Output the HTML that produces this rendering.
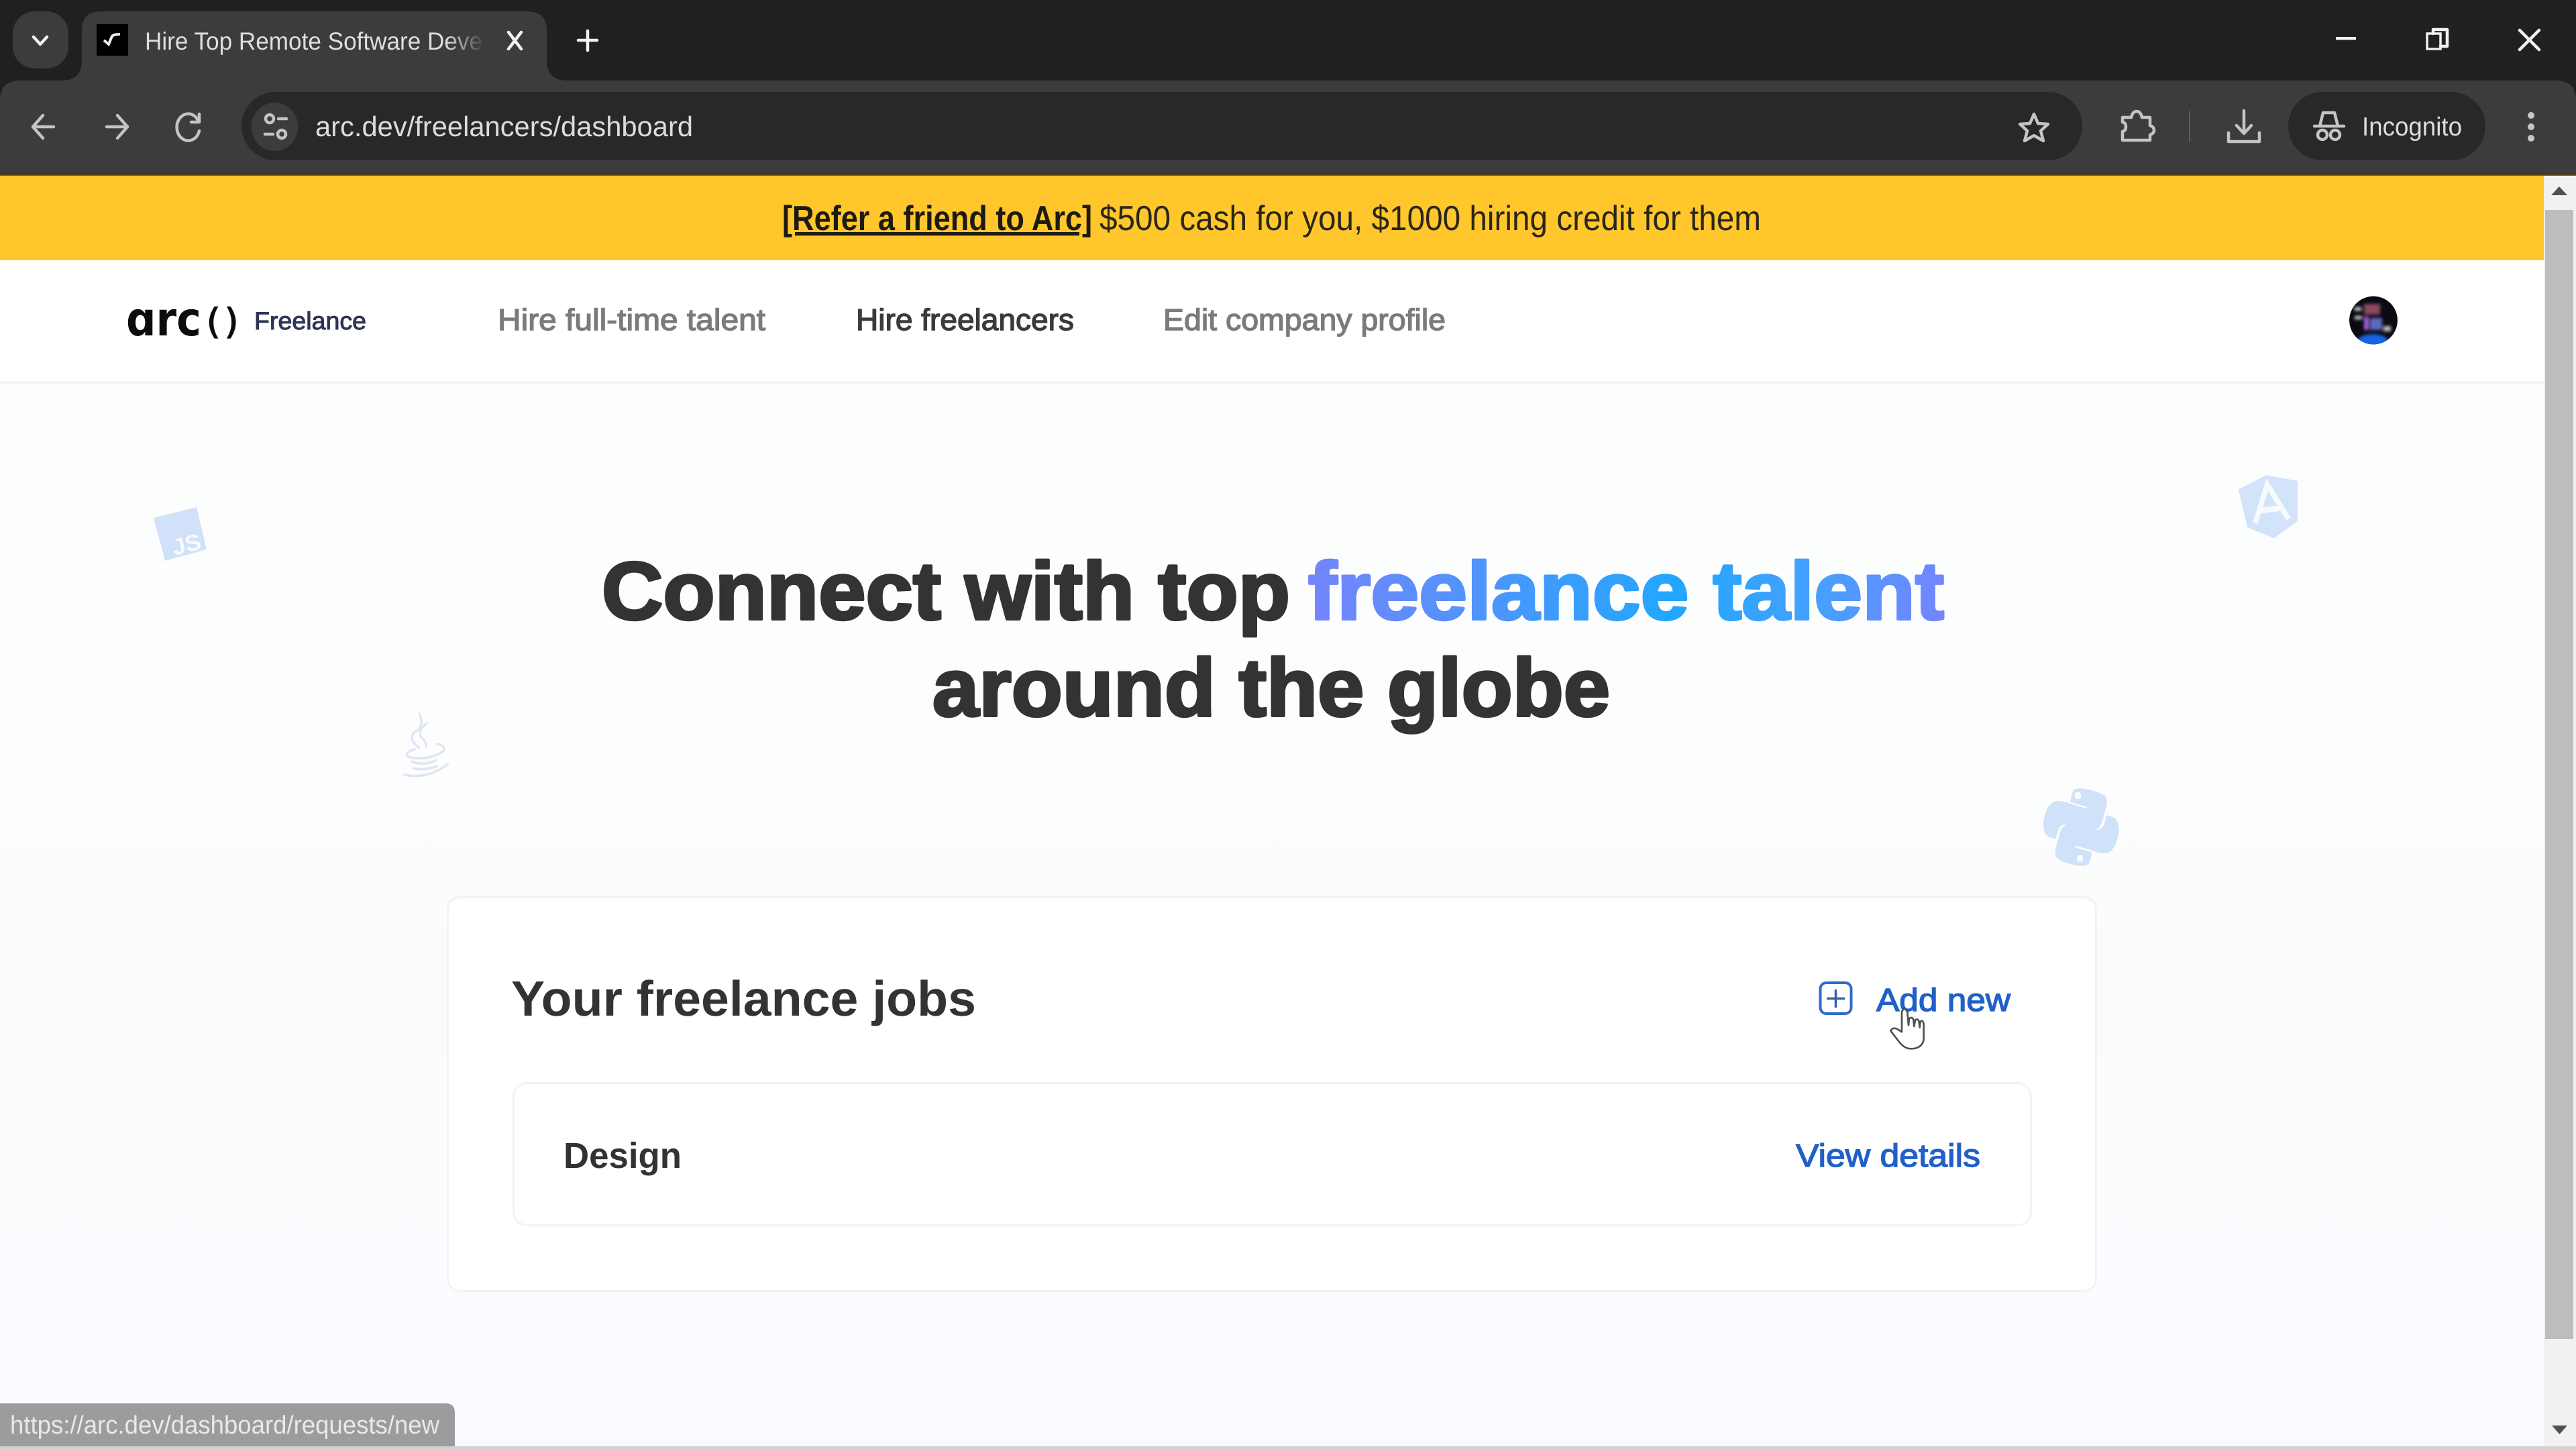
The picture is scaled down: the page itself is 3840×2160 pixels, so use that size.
<!DOCTYPE html>
<html lang="en"><head><meta charset="utf-8"><title>Hire Top Remote Software Developers</title>
<style>
html,body{margin:0;padding:0;width:3840px;height:2160px;overflow:hidden;background:#fff}
svg{display:block}
text{font-family:"Liberation Sans",sans-serif;text-rendering:geometricPrecision;white-space:pre}
.ui{fill:#e3e3e3}
.ic{fill:none;stroke:#c4c4c4;stroke-width:4.500;stroke-linecap:round;stroke-linejoin:round}
.w{fill:none;stroke:#f2f2f2;stroke-width:4.5;stroke-linecap:round;stroke-linejoin:round}
.os{font-weight:700}
</style></head><body>
<svg width="3840" height="2160" viewBox="0 0 3840 2160" xmlns="http://www.w3.org/2000/svg">
<defs>
<linearGradient id="pg" x1="0" y1="0" x2="0" y2="1"><stop offset="0" stop-color="#fcfdfd"/><stop offset=".35" stop-color="#fdfdfd"/><stop offset=".55" stop-color="#fafcfc"/><stop offset="1" stop-color="#fafbff"/></linearGradient>
<linearGradient id="hl" gradientUnits="userSpaceOnUse" x1="1950" y1="0" x2="2897" y2="0"><stop offset="0" stop-color="#7584fb"/><stop offset=".58" stop-color="#22a7ff"/><stop offset=".8" stop-color="#46a0fe"/><stop offset="1" stop-color="#7385fd"/></linearGradient>
<linearGradient id="fade" x1="0" y1="0" x2="1" y2="0"><stop offset="0" stop-color="#3c3c3c" stop-opacity="0"/><stop offset="1" stop-color="#3c3c3c"/></linearGradient>
<linearGradient id="sh" x1="0" y1="0" x2="0" y2="1"><stop offset="0" stop-color="#2e2a18"/><stop offset="1" stop-color="#7a6220"/></linearGradient>
<filter id="bl" x="-20%" y="-20%" width="140%" height="140%"><feGaussianBlur stdDeviation="2.5"/></filter>
<clipPath id="av"><circle cx="3538" cy="477.500" r="36"/></clipPath>
</defs>

<!-- browser chrome -->
<rect width="3840" height="262" fill="#1f2020"/>
<path d="M0 262V150Q0 120 30 120H92Q122 120 122 90V45Q122 17 150 17H785Q815 17 815 45V90Q815 120 845 120H3810Q3840 120 3840 150V262Z" fill="#3c3c3c"/>
<rect x="19" y="17" width="83" height="85" rx="33" fill="#3c3c3c"/>
<path class="w" d="M50 55l10 11 10-11" stroke-width="5"/>
<rect x="144" y="36" width="47" height="47" fill="#000"/>
<path d="M155 60l7 6 5-12q3-3 12-3" fill="none" stroke="#eee" stroke-width="4"/>
<text x="216" y="74" font-size="37" fill="#dedede" textLength="503" lengthAdjust="spacingAndGlyphs">Hire Top Remote Software Deve</text>
<rect x="665" y="30" width="58" height="60" fill="url(#fade)"/>
<path class="w" stroke-width="4" d="M758 48l19 25M777 48l-19 25"/>
<path class="w" d="M876 46v29M862 60h28" stroke-width="4.500"/>

<path class="ic" d="M80 189H50M64 172L49 189L64 206"/>
<path class="ic" d="M159 189H189M175 172L190 189L175 206"/>
<path class="ic" d="M295 179A17 20 0 1 0 297 195M297 170V182H285"/>
<rect x="360" y="137" width="2744" height="102" rx="51" fill="#282828"/>
<rect x="375" y="153" width="69" height="72" rx="35" fill="#3c3c3c"/>
<circle cx="402" cy="177" r="6" class="ic" stroke-width="4"/><path class="ic" stroke-width="4" d="M415 177h12M395 200h12"/><circle cx="420" cy="200" r="6" class="ic" stroke-width="4"/>
<text x="470" y="203" font-size="42" fill="#dcdcdc" textLength="563" lengthAdjust="spacingAndGlyphs">arc.dev/freelancers/dashboard</text>

<path class="ic" d="M3032 170l6 14 15 1-11 10 4 15-14-8-14 8 4-15-11-10 15-1z"/>
<path class="ic" d="M3164 175h13q2-9 8-9t8 9h12v12q6 2 6 7t-6 7v8h-41v-13q5-1 5-7t-5-7z"/>
<rect x="3263" y="165" width="2" height="47" fill="#5d5d5d"/>
<path class="ic" d="M3345 165v33M3334 187l11 12 11-12M3322 198v13h46v-13"/>
<rect x="3411" y="137" width="294" height="102" rx="51" fill="#282828"/>
<path class="ic" d="M3458 188l5-20h17l5 20M3450 188h44" stroke-width="5"/>
<circle cx="3462" cy="201" r="7" class="ic" stroke-width="4"/><circle cx="3481" cy="201" r="7" class="ic" stroke-width="4"/>
<text x="3521" y="202" font-size="39" fill="#dcdcdc" textLength="149" lengthAdjust="spacingAndGlyphs">Incognito</text>
<circle cx="3773" cy="172" r="5" fill="#c7c7c7"/><circle cx="3773" cy="189" r="5" fill="#c7c7c7"/><circle cx="3773" cy="206" r="5" fill="#c7c7c7"/>

<rect x="3482" y="55" width="30" height="4.500" fill="#f2f2f2"/>
<path class="w" stroke-width="3.500" d="M3627 50v-6h21v25h-10"/><rect x="3618" y="50" width="20" height="23" fill="none" stroke="#f2f2f2" stroke-width="3.500"/>
<path class="w" stroke-width="4" stroke-linecap="butt" d="M3756 45l29 29M3785 45l-29 29"/>

<rect y="258" width="3840" height="4" fill="url(#sh)"/>

<!-- page -->
<rect y="568" width="3792" height="1592" fill="url(#pg)"/>
<rect y="262" width="3792" height="126" fill="#ffc72c"/>
<rect y="388" width="3792" height="180" fill="#fff"/>
<rect y="568" width="3792" height="5" fill="#f5f5f5"/>

<text x="1166" y="343" font-size="52" class="os" fill="#1c1a12" text-decoration="underline" textLength="462" lengthAdjust="spacingAndGlyphs">[Refer a friend to Arc]</text>
<text x="1639" y="343" font-size="52" fill="#2a261a" textLength="986" lengthAdjust="spacingAndGlyphs">$500 cash for you, $1000 hiring credit for them</text>

<title>arc()</title>
<text y="500" font-size="70" font-weight="700" fill="#0c0c0c" style="font-family:'DejaVu Sans',sans-serif"><tspan x="188" textLength="112" lengthAdjust="spacingAndGlyphs">ɑrc</tspan></text>
<text y="497" font-size="52" fill="#0c0c0c" stroke="#0c0c0c" stroke-width="1.500" style="font-family:'DejaVu Sans',sans-serif"><tspan x="308">(</tspan><tspan x="335">)</tspan></text>
<text x="379" y="491" font-size="37" fill="#2e3558" stroke="#2e3558" stroke-width="1" textLength="167" lengthAdjust="spacingAndGlyphs">Freelance</text>
<text x="742" y="492" font-size="45" fill="#7b7b7b" stroke="#7b7b7b" stroke-width="1.400" textLength="399" lengthAdjust="spacingAndGlyphs">Hire full-time talent</text>
<text x="1276" y="492" font-size="45" fill="#3a3a3a" stroke="#3a3a3a" stroke-width="1.400" textLength="325" lengthAdjust="spacingAndGlyphs">Hire freelancers</text>
<text x="1734" y="492" font-size="45" fill="#7b7b7b" stroke="#7b7b7b" stroke-width="1.400" textLength="421" lengthAdjust="spacingAndGlyphs">Edit company profile</text>

<g clip-path="url(#av)"><circle cx="3538" cy="477.500" r="36" fill="#0b0a12"/>
<g filter="url(#bl)"><rect x="3524" y="453" width="24" height="16" fill="#8a4a60"/><rect x="3524" y="472" width="7" height="20" fill="#a860e0"/><rect x="3533" y="474" width="18" height="18" fill="#5a6ac0"/><rect x="3510" y="458" width="10" height="5" fill="#ddd"/><rect x="3510" y="471" width="11" height="5" fill="#ccc"/><rect x="3553" y="486" width="11" height="8" fill="#bbb"/><ellipse cx="3537" cy="510" rx="24" ry="12" fill="#1664e4"/></g></g>

<!-- floating icons -->
<g>
<path d="M229 772L293 756L308 819L246 836Z" fill="#d1e1f9"/>
<text x="0" y="0" font-size="34" font-weight="700" fill="#f8fafe" transform="translate(260 828) rotate(-14)" textLength="43" lengthAdjust="spacingAndGlyphs">JS</text>
</g>
<g transform="matrix(.446 0 0 .51 150 400)" fill="none" stroke="#dde6f3" stroke-width="7" stroke-linecap="round">
<path d="M1065 1302Q1085 1340 1050 1355Q1025 1375 1065 1402"/>
<path d="M1090 1330Q1060 1350 1070 1370Q1090 1385 1088 1398"/>
<path d="M1050 1405Q1010 1418 1030 1428Q1090 1442 1145 1412Q1155 1395 1125 1390"/>
<path d="M1040 1442Q1080 1455 1120 1438M1045 1462Q1085 1468 1125 1455"/>
<path d="M1015 1480Q1090 1495 1160 1450"/>
</g>
<g transform="matrix(.383 0 0 .421 2950 660)">
<path d="M1118 115L1240 135V278L1148 338L1045 300L1010 165Z" fill="#d2e3fa"/>
<path d="M1075 285L1122 148L1205 270M1098 240L1170 232" fill="none" stroke="#f7fafd" stroke-width="20"/>
<path d="M355 1272L365 1235Q375 1220 410 1225Q470 1235 490 1250Q503 1265 495 1290L480 1340Q465 1382 425 1372L350 1352Q315 1345 305 1380L298 1403L270 1395Q250 1385 250 1345Q262 1280 295 1270Q320 1265 355 1278L420 1296L422 1290Z" fill="#d0e1fa"/>
<path d="M440 1450L430 1487Q420 1502 385 1497Q325 1487 305 1472Q292 1457 300 1432L315 1382Q330 1340 370 1350L445 1370Q480 1377 490 1342L497 1319L525 1327Q545 1337 545 1377Q533 1442 500 1452Q475 1457 440 1444L375 1426L373 1432Z" fill="#d0e1fa"/>
<circle cx="385" cy="1249" r="13" fill="#f8fbfd"/><circle cx="393" cy="1472" r="13" fill="#f8fbfd"/>
</g>

<!-- headline -->
<g font-size="122" font-weight="700" stroke-width="4" stroke-linejoin="round">
<text x="897" y="923" fill="#333333" stroke="#333333" textLength="1026" lengthAdjust="spacingAndGlyphs">Connect with top</text>
<text x="1950" y="923" fill="url(#hl)" stroke="url(#hl)" textLength="948" lengthAdjust="spacingAndGlyphs">freelance talent</text>
<text x="1390" y="1067" fill="#333333" stroke="#333333" textLength="1010" lengthAdjust="spacingAndGlyphs">around the globe</text>
</g>

<!-- jobs card -->
<rect x="667.500" y="1337.500" width="2457" height="587" rx="18" fill="#fff" stroke="#f2f3f5" stroke-width="3"/>
<text x="762" y="1514" font-size="74" class="os" fill="#333" textLength="693" lengthAdjust="spacingAndGlyphs">Your freelance jobs</text>
<rect x="2713.500" y="1465" width="46" height="46" rx="9" fill="none" stroke="#2e6cc9" stroke-width="4"/>
<path d="M2736.500 1475v27M2723 1488.500h27" stroke="#2f62ad" stroke-width="3.500" fill="none"/>
<text x="2797" y="1507" font-size="48" fill="#2060c8" stroke="#2060c8" stroke-width="1.400" textLength="200" lengthAdjust="spacingAndGlyphs">Add new</text>
<rect x="765.500" y="1614.500" width="2262" height="212" rx="20" fill="#fff" stroke="#f2f3f5" stroke-width="3"/>
<text x="840" y="1741" font-size="54" class="os" fill="#333" textLength="176" lengthAdjust="spacingAndGlyphs">Design</text>
<text x="2677" y="1739" font-size="48" fill="#2060c8" stroke="#2060c8" stroke-width="1.400" textLength="275" lengthAdjust="spacingAndGlyphs">View details</text>
<g transform="translate(2600 1400) scale(.3333)"><path d="M705 415L705 325Q715 300 730 325L735 385L738 355Q750 345 757 360L760 390L765 362Q778 352 782 370L785 395L788 368Q800 360 803 380L803 450Q795 490 745 490Q715 490 690 455L655 410Q665 390 690 405Z" fill="#fff" stroke="#505050" stroke-width="8" stroke-linejoin="round"/></g>

<!-- scrollbar -->
<rect x="3792" y="262" width="48" height="1898" fill="#f1f1f1"/>
<rect x="3794" y="313" width="42" height="1683" fill="#bdbdbd"/>
<path d="M3815 278l-12 13h24z" fill="#505050"/>
<path d="M3804 2125h23l-11.500 13z" fill="#505050"/>

<!-- status bar -->
<rect y="2156" width="3840" height="4" fill="#cfd0d1"/>
<path d="M0 2092H664Q678 2092 678 2106V2156H0Z" fill="#9a9c9e"/>
<text x="15" y="2137" font-size="38" fill="#e9e9e9" textLength="640" lengthAdjust="spacingAndGlyphs">https://arc.dev/dashboard/requests/new</text>
</svg>
</body></html>
